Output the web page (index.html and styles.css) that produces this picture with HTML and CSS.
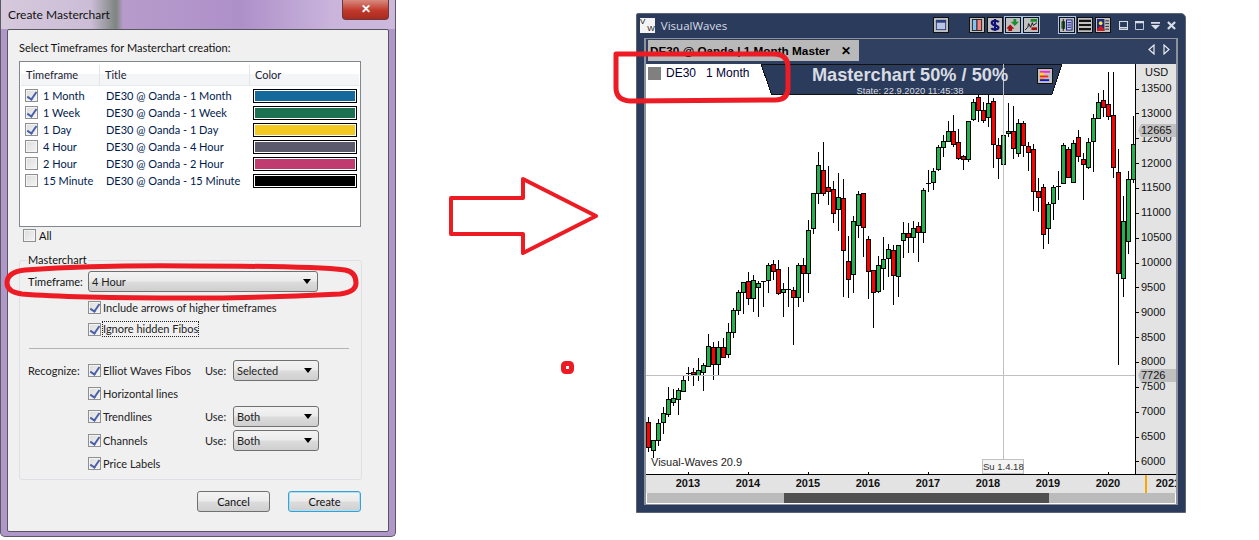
FILE: index.html
```html
<!DOCTYPE html>
<html lang="en">
<head>
  <meta charset="UTF-8" />
  <title>Create Masterchart</title>
  <link rel="stylesheet" href="styles.css">
</head>
<body>
  <!-- dialog on the left -->
  <div class="dialog">
    <div class="dialog-title">
      <span>Create Masterchart</span>
      <div class="close-btn">&#10005;</div>
    </div>
    <div class="dialog-body">
      <p class="intro">Select Timeframes for Masterchart creation:</p>
      <div class="tf-list">
        <div class="tf-head">
          <div class="col-tf">Timeframe</div>
          <div class="col-title">Title</div>
          <div class="col-color">Color</div>
        </div>
        <div class="tf-row">
          <div class="col-tf"><i class="cb on"></i>1 Month</div>
          <div class="col-title">DE30 @ Oanda - 1 Month</div>
          <div class="swatch swatch-blue"></div>
        </div>
        <div class="tf-row">
          <div class="col-tf"><i class="cb on"></i>1 Week</div>
          <div class="col-title">DE30 @ Oanda - 1 Week</div>
          <div class="swatch swatch-green"></div>
        </div>
        <div class="tf-row">
          <div class="col-tf"><i class="cb on"></i>1 Day</div>
          <div class="col-title">DE30 @ Oanda - 1 Day</div>
          <div class="swatch swatch-yellow"></div>
        </div>
        <div class="tf-row">
          <div class="col-tf"><i class="cb"></i>4 Hour</div>
          <div class="col-title">DE30 @ Oanda - 4 Hour</div>
          <div class="swatch swatch-slate"></div>
        </div>
        <div class="tf-row">
          <div class="col-tf"><i class="cb"></i>2 Hour</div>
          <div class="col-title">DE30 @ Oanda - 2 Hour</div>
          <div class="swatch swatch-pink"></div>
        </div>
        <div class="tf-row">
          <div class="col-tf"><i class="cb"></i>15 Minute</div>
          <div class="col-title">DE30 @ Oanda - 15 Minute</div>
          <div class="swatch swatch-black"></div>
        </div>
      </div>
      <div class="all-row"><i class="cb"></i>All</div>

      <div class="group">
        <div class="legend">Masterchart</div>
        <div class="tf-select">
          <span class="lbl">Timeframe:</span>
          <div class="combo combo-wide">4 Hour</div>
        </div>
        <div class="opt opt-first"><i class="cb on"></i>Include arrows of higher timeframes</div>
        <div class="opt opt-second"><i class="cb on"></i><span class="focused">Ignore hidden Fibos</span></div>
        <div class="sep"></div>
        <div class="rec rec-1">
          <span class="lbl">Recognize:</span>
          <div class="rec-name"><i class="cb on"></i>Elliot Waves Fibos</div>
          <span class="use">Use:</span>
          <div class="combo">Selected</div>
        </div>
        <div class="rec rec-2">
          <span class="lbl"></span>
          <div class="rec-name"><i class="cb on"></i>Horizontal lines</div>
        </div>
        <div class="rec rec-3">
          <span class="lbl"></span>
          <div class="rec-name"><i class="cb on"></i>Trendlines</div>
          <span class="use">Use:</span>
          <div class="combo">Both</div>
        </div>
        <div class="rec rec-4">
          <span class="lbl"></span>
          <div class="rec-name"><i class="cb on"></i>Channels</div>
          <span class="use">Use:</span>
          <div class="combo">Both</div>
        </div>
        <div class="rec rec-5">
          <span class="lbl"></span>
          <div class="rec-name"><i class="cb on"></i>Price Labels</div>
        </div>
      </div>

      <div class="buttons">
        <div class="btn">Cancel</div>
        <div class="btn btn-default">Create</div>
      </div>
    </div>
  </div>

  <!-- chart window on the right -->
  <div class="vw">
    <div class="vw-title">
      <div class="vw-logo"><span>V</span><span>W</span></div>
      <span class="vw-name">VisualWaves</span>
      <div class="tools">
        <div class="tool"><svg viewBox="0 0 13 13"><rect x="1.5" y="1.5" width="10" height="10" fill="#b8c4e0" stroke="#2a3f80"/><rect x="1" y="1" width="11" height="3" fill="#2a3f80"/></svg></div>
        <div class="tool gap-l"><svg viewBox="0 0 13 13"><rect x="1.5" y="0.5" width="5" height="12" fill="#7fc4f4" stroke="#222"/><rect x="6.5" y="0.5" width="5" height="12" fill="#ff8080" stroke="#222"/></svg></div>
        <div class="tool"><svg viewBox="0 0 13 13"><path d="M10.500 3.500C9.500 1.500 3 1 3 4.200S10.200 6.500 10.200 9.300 4 12 2.500 9.800M6.500 0v13" fill="none" stroke="#10107a" stroke-width="2.400"/></svg></div>
        <div class="tool sel"><svg viewBox="0 0 13 13"><path d="M7 0h3v3h3L8.500 7.500 4 3h3z" fill="#1a8f2e"/><path d="M3.500 6L8 10.500H5.500V13h-4v-2.500H-1z" fill="#a81010"/></svg></div>
        <div class="tool sel"><svg viewBox="0 0 13 13"><rect x="6" y="0" width="7" height="3" fill="#1a8f2e"/><rect x="7" y="9" width="6" height="3" fill="#a81010"/><path d="M0 12l3-3 1-4 2 4 2-5 1 3 4-3" fill="none" stroke="#111"/></svg></div>
        <div class="tool sel gap-l"><svg viewBox="0 0 13 13"><rect x="1" y="3" width="3" height="7" fill="#1a8f2e" stroke="#111" stroke-width=".7"/><path d="M2.500 0v13" stroke="#111"/><rect x="6" y="1" width="6" height="11" fill="#c0c8e0" stroke="#10107a"/><path d="M7 4h4M7 6.500h4M7 9h4" stroke="#10107a"/></svg></div>
        <div class="tool"><svg viewBox="0 0 13 13"><path d="M0 2h13M0 6.500h13M0 11h13" stroke="#111" stroke-width="2.400"/></svg></div>
        <div class="tool"><svg viewBox="0 0 13 13"><rect x="0" y="0" width="8" height="13" fill="#1c2a80"/><circle cx="4" cy="4.500" r="2" fill="#ffe23a"/><path d="M0 11l4-4 4 4v2H0z" fill="#d01818"/><path d="M9 2h4M9 5h4M9 8h4M9 11h4" stroke="#222"/></svg></div>
      </div>
      <div class="win-btns">
        <svg viewBox="0 0 10 10"><path d="M.500.500h9v9h-9zM0 7.500h10" fill="none" stroke="#d8dde6" stroke-width="1.400"/></svg>
        <svg viewBox="0 0 10 10"><path d="M.500.500h9v9h-9z" fill="none" stroke="#d8dde6"/><rect width="10" height="2.500" fill="#d8dde6"/></svg>
        <svg viewBox="0 0 10 10"><path d="M0 1h10v2H0zM0 4.500h10L5 9.500z" fill="#d8dde6"/></svg>
        <svg viewBox="0 0 10 10"><path d="M1 1l8 8M9 1l-8 8" stroke="#d8dde6" stroke-width="2.400"/></svg>
      </div>
    </div>
    <div class="vw-frame">
      <div class="tab-strip">
        <div class="tab"><span>DE30 @ Oanda | 1 Month Master</span><b>&#10005;</b></div>
        <div class="tab-arrows">
          <svg viewBox="0 0 7 11"><path d="M6 1v9L1 5.500z" fill="none" stroke="#e8ecf2" stroke-width="1.200"/></svg>
          <svg viewBox="0 0 7 11"><path d="M1 1v9l5-4.500z" fill="none" stroke="#e8ecf2" stroke-width="1.200"/></svg>
        </div>
      </div>
      <div class="chart-row">
        <div class="plot">
          <svg class="plot-svg" viewBox="646 64 489 410">
            <g id="candles"></g>
            <polygon points="761,64 1062,64 1052,94 771.500,94" fill="#2b3b5c" stroke="#111"/>
            <path d="M1003.500 64V459M646 375.500H1135" stroke="#c0c0c0" fill="none"/>
            <path d="M688.500 472v2M748.500 472v2M808.500 472v2M868.500 472v2M928.500 472v2M988.500 472v2M1048.500 472v2M1108.500 472v2" stroke="#000" fill="none"/>
          </svg>
          <div class="legend-chip"><i></i><span>DE30</span><span>1 Month</span></div>
          <div class="banner">
            <div class="banner-title">Masterchart 50% / 50%</div>
            <div class="banner-state">State: 22.9.2020 11:45:38</div>
          </div>
          <div class="banner-tool"><svg viewBox="0 0 13 13"><rect x="1" y="1" width="11" height="2" fill="#ff20e0"/><rect x="1" y="3" width="4" height="3" fill="#ffe000"/><rect x="1" y="6" width="9" height="2" fill="#ff2020"/><rect x="1" y="8.500" width="5" height="1.500" fill="#ffa000"/><rect x="1" y="10" width="10" height="2" fill="#1010e0"/></svg></div>
          <div class="stamp">Visual-Waves 20.9</div>
          <div class="date-tip">Su 1.4.18</div>
        </div>
        <div class="y-axis">
          <div class="ccy">USD</div>
          <div class="prices">
            <span>13500</span><span>13000</span><span>12500</span><span>12000</span>
            <span>11500</span><span>11000</span><span>10500</span><span>10000</span>
            <span>9500</span><span>9000</span><span>8500</span><span>8000</span>
            <span>7500</span><span>7000</span><span>6500</span><span>6000</span>
          </div>
          <div class="price-tag tag-last">12665</div>
          <div class="price-tag tag-cross">7726</div>
        </div>
      </div>
      <div class="x-axis">
        <span>2013</span><span>2014</span><span>2015</span><span>2016</span>
        <span>2017</span><span>2018</span><span>2019</span><span>2020</span><span>2021</span>
        <i class="now-mark"></i>
      </div>
      <div class="scroll"><div class="thumb"></div></div>
    </div>
  </div>

  <!-- red marks drawn over the screenshot -->
  <svg class="marks" viewBox="0 0 1259 540">
    <path class="mark mark-thick" d="M7 283Q7 272 25 270Q100 265 190 266Q310 266 345 270Q356 272 356 283Q356 292 340 294Q260 298 190 298Q70 298 22 294Q7 292 7 283z"/>
    <path class="mark mark-thick" d="M616 54H774Q788 54 788 68V88Q788 100 775 100L630 101Q616 100 616 88z"/>
    <path class="mark" d="M451 198H523V179L596 216L523 253V234H451z"/>
    <rect class="mark mark-dot" x="563.500" y="363.500" width="8" height="8" rx="2"/>
  </svg>

  <script src="chart.js"></script>
</body>
</html>
```

FILE: styles.css
```css
* {
  box-sizing: border-box;
}

body {
  margin: 0;
  width: 1259px;
  height: 540px;
  position: relative;
  overflow: hidden;
  background: white;
  font-family: Lato, "Open Sans", sans-serif;
  font-size: 11px;
  color: #111;
}

/* dialog */
.dialog {
  position: absolute;
  left: 0;
  top: 0;
  width: 396px;
  height: 537px;
  padding: 0 6px;
  background: #b197c9;
  border: 1px solid #5a5a62;
  border-top: none;
  border-radius: 0 0 5px 5px;
}

.dialog-title {
  height: 29px;
  margin: 0 -6px;
  padding: 5px 0 0 7px;
  font-size: 12px;
  line-height: 20px;
  position: relative;
  background: linear-gradient(90deg, #d6c9dc 0, #cbbdd6 90px, #7d8580 115px, #b79bcb 122px, #ae90c9 240px, #c9b4dc 330px, #cdb9dc 100%);
}

.close-btn {
  position: absolute;
  left: 341px;
  top: 0;
  width: 47px;
  height: 20px;
  border: 1px solid #6a3a3a;
  border-top: none;
  border-radius: 0 0 4px 4px;
  background: linear-gradient(#d98a80, #c0392b 55%, #a82a20);
  color: white;
  font-size: 12px;
  font-weight: 700;
  line-height: 18px;
  text-align: center;
}

.dialog-body {
  height: 503px;
  padding: 0 0 0 11px;
  background: #f0f0f0;
  border: 1px solid #55565e;
  border-radius: 2px;
}

.intro {
  margin: 0;
  padding-top: 10px;
  height: 31px;
  line-height: 16px;
}

.tf-list {
  width: 342px;
  height: 166px;
  background: white;
  border: 1px solid #82878f;
}

.tf-head {
  display: flex;
  height: 23px;
  margin: 1px 1px 1px 1px;
  padding-top: 2px;
  background: linear-gradient(#fff 50%, #f4f5f7 50%);
  border-bottom: 1px solid #e6e8ec;
  align-items: center;
  line-height: 20px;
  color: #223;
}

.tf-head .col-tf {
  width: 79px;
  padding-left: 5px;
  border-right: 1px solid #e3e5ea;
}

.tf-head .col-title {
  width: 150px;
  padding-left: 5px;
  border-right: 1px solid #e3e5ea;
}

.tf-head .col-color {
  padding-left: 5px;
}

.tf-row {
  display: flex;
  align-items: center;
  height: 17px;
  color: #001a4d;
}

.tf-row .col-tf {
  width: 86px;
  padding-left: 5px;
  display: flex;
  align-items: center;
}

.tf-row .col-title {
  width: 147px;
}

.swatch {
  width: 104px;
  height: 14px;
  border: 1px solid black;
  box-shadow: inset 0 0 0 1px white;
}

.swatch-blue { background: #156a9d; }
.swatch-green { background: #1b7151; }
.swatch-yellow { background: #f3c91f; }
.swatch-slate { background: #5b5a6c; }
.swatch-pink { background: #c03c70; }
.swatch-black { background: black; }

.cb {
  display: inline-block;
  position: relative;
  flex: none;
  width: 13px;
  height: 13px;
  margin-right: 5px;
  border: 1px solid #8e8f8f;
  background: linear-gradient(135deg, #dcdcdc, #f4f4f4);
  box-shadow: inset 0 0 0 1px #f4f4f4;
}

.cb.on::after {
  content: "";
  position: absolute;
  left: 3px;
  top: 0;
  width: 4px;
  height: 8px;
  border-right: 2px solid #4a5fa8;
  border-bottom: 2px solid #4a5fa8;
  transform: rotate(35deg);
}

.all-row {
  display: flex;
  align-items: center;
  height: 13px;
  margin: 2px 0 0 4px;
}

.all-row .cb {
  margin-right: 3px;
}

.group {
  width: 343px;
  height: 220px;
  margin-top: 18px;
  position: relative;
  border: 1px solid #dcdfe3;
  border-radius: 3px;
}

.legend {
  position: absolute;
  left: 7px;
  top: -9px;
  padding: 0 1px;
  line-height: 16px;
  background: #f0f0f0;
}

.lbl {
  display: inline-block;
  width: 60px;
  flex: none;
}

.tf-select {
  display: flex;
  align-items: center;
  height: 21px;
  margin: 10px 0 0 8px;
}

.combo {
  position: relative;
  width: 86px;
  height: 21px;
  padding-left: 3px;
  line-height: 19px;
  border: 1px solid #707070;
  border-radius: 3px;
  background: linear-gradient(#f3f3f3, #ebebeb 48%, #dcdcdc 52%, #cfcfcf);
  color: #222;
}

.combo::after {
  content: "";
  position: absolute;
  right: 6px;
  top: 7px;
  border: 4px solid transparent;
  border-top: 5px solid black;
  border-bottom: none;
}

.combo-wide {
  width: 230px;
}

.opt {
  display: flex;
  align-items: center;
  height: 14px;
  margin-left: 68px;
  color: #222;
}

.opt .cb {
  margin-right: 2px;
}

.opt-first {
  margin-top: 8px;
}

.opt-second {
  margin-top: 8px;
}

.focused {
  outline: 1px dotted #222;
  line-height: 14px;
}

.sep {
  width: 320px;
  height: 1px;
  margin: 12px 0 0 9px;
  background: #b4b4b4;
}

.rec {
  display: flex;
  align-items: center;
  height: 21px;
  margin-left: 8px;
  color: #222;
}

.rec-1 { margin-top: 11px; }
.rec-2 { margin-top: 2px; }
.rec-3 { margin-top: 2px; }
.rec-4 { margin-top: 3px; }
.rec-5 { margin-top: 2px; }

.rec-name {
  display: flex;
  align-items: center;
  width: 117px;
}

.rec-name .cb {
  margin-right: 2px;
}

.use {
  width: 28px;
}

.buttons {
  display: flex;
  justify-content: flex-end;
  gap: 18px;
  width: 342px;
  margin-top: 11px;
}

.btn {
  width: 73px;
  height: 21px;
  border: 1px solid #707070;
  border-radius: 3px;
  background: linear-gradient(#f3f3f3, #ebebeb 48%, #dcdcdc 52%, #cfcfcf);
  text-align: center;
  line-height: 19px;
}

.btn-default {
  border-color: #3c9fd0;
  box-shadow: inset 0 0 0 1px #a8e0f4;
}

/* chart window */
.vw {
  position: absolute;
  left: 636px;
  top: 13px;
  width: 550px;
  height: 500px;
  background: #2b3b5c;
  border: 1px solid #5f6470;
  border-radius: 2px 5px 0 0;
  font-family: "Liberation Sans", Arial, sans-serif;
}

.vw-title {
  display: flex;
  align-items: center;
  height: 24px;
  padding: 0 9px 2px 3px;
}

.vw-logo {
  width: 15px;
  height: 15px;
  background: #f4f4f4;
  color: #111;
  font-size: 8px;
  line-height: 7px;
  display: flex;
  justify-content: space-between;
}

.vw-logo span:last-child {
  padding-top: 7px;
}

.vw-name {
  margin-left: 6px;
  width: 275px;
  font-family: "Open Sans", sans-serif;
  font-size: 11.500px;
  color: #d8dde6;
}

.tools {
  display: flex;
  gap: 2px;
}

.tool {
  width: 16px;
  height: 16px;
  background: #c0c0c0;
  border: 1px solid #111;
  padding: 1px;
}

.tool svg {
  display: block;
  width: 12px;
  height: 12px;
}

.tool.sel {
  outline: 1px solid #a8c4ea;
}

.gap-l {
  margin-left: 18px;
}

.win-btns {
  display: flex;
  gap: 7px;
  margin-left: 8px;
}

.win-btns svg {
  display: block;
  width: 9px;
  height: 9px;
}

.vw-frame {
  width: 534px;
  margin-left: 7px;
  height: 467px;
  border: 1px solid #8e9199;
  border-width: 1px 2px 2px 2px;
  background: #2f4060;
}

.tab-strip {
  display: flex;
  align-items: flex-start;
  justify-content: space-between;
  height: 25px;
  padding: 1px 6px 0 2px;
}

.tab {
  display: flex;
  justify-content: space-between;
  align-items: center;
  width: 211px;
  height: 21px;
  padding: 0 8px 0 2px;
  background: #b9b9b9;
  color: black;
  font-size: 11.750px;
  font-weight: 700;
  white-space: nowrap;
}

.tab b {
  font-size: 12px;
}

.tab-arrows {
  display: flex;
  gap: 8px;
  margin-top: 4px;
}

.tab-arrows svg {
  display: block;
  width: 7px;
  height: 11px;
}

.chart-row {
  display: flex;
  height: 410px;
  background: white;
}

.plot {
  position: relative;
  width: 489px;
  height: 410px;
  overflow: hidden;
}

.plot-svg {
  position: absolute;
  left: 0;
  top: 0;
  width: 489px;
  height: 410px;
  shape-rendering: crispEdges;
}

.legend-chip {
  position: absolute;
  left: 2px;
  top: 2px;
  display: flex;
  align-items: center;
  gap: 10px;
  font-size: 12px;
  color: #000033;
}

.legend-chip i {
  width: 13px;
  height: 13px;
  margin-right: -5px;
  background: #808080;
}

.banner {
  position: absolute;
  left: 124px;
  top: 0;
  width: 280px;
  text-align: center;
  color: #d9dde3;
}

.banner-title {
  margin-top: 1px;
  font-size: 18.200px;
  font-weight: 700;
  line-height: 21px;
}

.banner-state {
  font-size: 9.350px;
  line-height: 10px;
}

.banner-tool {
  position: absolute;
  left: 391px;
  top: 4px;
  width: 16px;
  height: 16px;
  padding: 1px;
  background: #c0c0c0;
  border: 1px solid #111;
}

.banner-tool svg {
  display: block;
  width: 12px;
  height: 12px;
}

.stamp {
  position: absolute;
  left: 5px;
  bottom: 6px;
  font-size: 11px;
  color: #222;
}

.date-tip {
  position: absolute;
  left: 336px;
  bottom: 0;
  width: 42px;
  height: 15px;
  background: #f4f4f4;
  border: 1px solid #c0c0c0;
  font-size: 9.500px;
  line-height: 13px;
  text-align: center;
  white-space: nowrap;
  color: #333;
}

.y-axis {
  position: relative;
  width: 41px;
  background: #e3e3e3;
  border-left: 1px solid black;
}

.ccy {
  height: 12px;
  padding-left: 9px;
  margin-top: 2px;
  font-size: 11px;
  line-height: 12px;
}

.prices {
  display: grid;
  grid-auto-rows: 24.870px;
  margin-top: -2px;
  padding-left: 4px;
}

.prices span {
  display: block;
  height: 24.870px;
  line-height: 24.870px;
  font-size: 11px;
  color: #111;
}

.prices span::before {
  content: "";
  display: inline-block;
  width: 3px;
  height: 1px;
  margin-left: -4px;
  margin-right: 2px;
  vertical-align: middle;
  background: black;
}

.price-tag {
  position: absolute;
  left: 2px;
  height: 13px;
  width: 38px;
  padding-left: 3px;
  background: #c0c0c0;
  font-size: 11px;
  line-height: 13px;
  color: #111;
  clip-path: polygon(3px 0, 100% 0, 100% 100%, 3px 100%, 0 50%);
}

.tag-last { top: 60px; }
.tag-cross { top: 305px; }

.x-axis {
  position: relative;
  display: flex;
  width: 530px;
  height: 19px;
  padding-left: 12px;
  overflow: hidden;
  background: #e3e3e3;
  border-top: 1px solid black;
}

.x-axis span {
  flex: none;
  width: 60px;
  font-size: 11px;
  font-weight: 700;
  line-height: 17px;
  text-align: center;
}

.now-mark {
  position: absolute;
  left: 499px;
  top: 0;
  width: 2px;
  height: 19px;
  background: #f5a800;
}

.scroll {
  width: 530px;
  height: 11px;
  padding: 0 126px 0 137px;
  background: #bbb;
  border: 1px solid white;
  border-width: 0 1px 1px 1px;
}

.thumb {
  height: 10px;
  background: #505050;
}

/* annotations */
.marks {
  position: absolute;
  left: 0;
  top: 0;
  width: 1259px;
  height: 540px;
  pointer-events: none;
}

.mark {
  fill: none;
  stroke: #ed1c24;
  stroke-width: 4;
  stroke-linejoin: round;
}

.mark-thick,
.mark-dot {
  stroke-width: 5;
}
```

FILE: chart.js
```js
// one row per month, first bar at x = 648, 5px apart
// [type, wick top, wick bottom, body top, body bottom] in page pixels
var bars = [
  ["r",417,452,422,447],["g",440,458,440,450],["g",419,446,423,440],["g",407,434,413,422],
  ["g",387,417,399,414],["g",389,406,398,402],["g",388,415,390,399],["g",376,392,380,391],
  ["k",367,381,373,374],["r",368,386,372,374],["g",358,381,370,375],["g",363,391,365,372],
  ["g",334,367,346,366],["r",342,380,347,364],["g",341,375,347,364],["r",338,357,347,357],
  ["g",323,358,332,354],["g",308,338,310,332],["g",290,315,292,310],["g",282,314,282,292],
  ["r",272,305,281,298],["g",275,312,280,298],["g",281,317,283,287],["k",282,307,281,282],
  ["g",263,293,265,280],["r",260,280,264,271],["r",260,295,269,293],["g",283,317,289,292],
  ["k",267,307,289,290],["r",287,345,290,297],["g",263,307,265,297],["r",258,302,265,273],
  ["g",220,293,230,273],["g",193,234,193,228],["g",152,204,165,193],["r",142,196,170,193],
  ["r",166,205,187,191],["r",181,223,189,213],["g",173,231,197,209],["r",179,297,198,250],
  ["r",236,298,261,279],["g",216,293,221,274],["g",191,238,194,225],["r",193,257,193,227],
  ["r",236,299,239,271],["r",270,328,270,292],["g",256,293,265,291],["g",237,290,259,268],
  ["g",244,277,249,258],["r",245,305,250,275],["g",245,297,245,276],["g",222,258,233,240],
  ["r",223,253,233,237],["g",221,253,228,237],["r",222,262,226,232],["g",188,243,190,232],
  ["k",170,192,183,184],["g",168,190,171,182],["g",145,171,147,169],["g",135,157,141,147],
  ["g",121,141,131,141],["r",115,147,131,144],["r",129,160,142,158],["r",155,170,156,159],
  ["g",121,162,121,159],["g",99,121,102,119],["r",95,122,97,110],["r",102,123,110,120],
  ["g",95,127,103,117],["r",98,168,101,144],["r",138,179,145,158],["g",135,164,135,164],
  ["g",103,137,131,133],["r",106,159,131,148],["g",119,157,123,153],["r",121,157,123,145],
  ["r",142,171,146,152],["r",144,211,149,191],["r",178,212,191,197],["r",184,249,187,234],
  ["g",202,244,204,228],["g",185,220,187,203],["k",171,200,186,187],["g",143,184,145,183],
  ["r",147,178,149,177],["g",140,182,143,182],["r",130,162,137,156],["r",153,200,159,164],
  ["g",138,169,142,167],["g",114,172,118,141],["g",93,118,102,118],["r",90,117,100,107],
  ["r",72,120,104,116],["r",72,178,115,167],["r",149,365,172,273],["g",196,297,221,278],
  ["g",171,254,179,241],["g",116,183,144,179]
];

var NS = "http://www.w3.org/2000/svg";
var colors = { g: "#22b14c", r: "#ff0000", k: "#000000" };
var group = document.getElementById("candles");

function addRect(x, y, w, h, fill, stroke) {
  var r = document.createElementNS(NS, "rect");
  r.setAttribute("x", x);
  r.setAttribute("y", y);
  r.setAttribute("width", w);
  r.setAttribute("height", h);
  r.setAttribute("fill", fill);
  if (stroke) r.setAttribute("stroke", stroke);
  group.appendChild(r);
}

bars.forEach(function (b, i) {
  var x = 648 + i * 5;
  addRect(x, b[1], 1, b[2] - b[1], "#000");
  if (b[0] === "k") {
    addRect(x - 2, b[3], 5, 1, "#000");
  } else {
    addRect(x - 1.5, b[3] + 0.5, 4, Math.max(b[4] - b[3], 1), colors[b[0]], "#000");
  }
});
```
